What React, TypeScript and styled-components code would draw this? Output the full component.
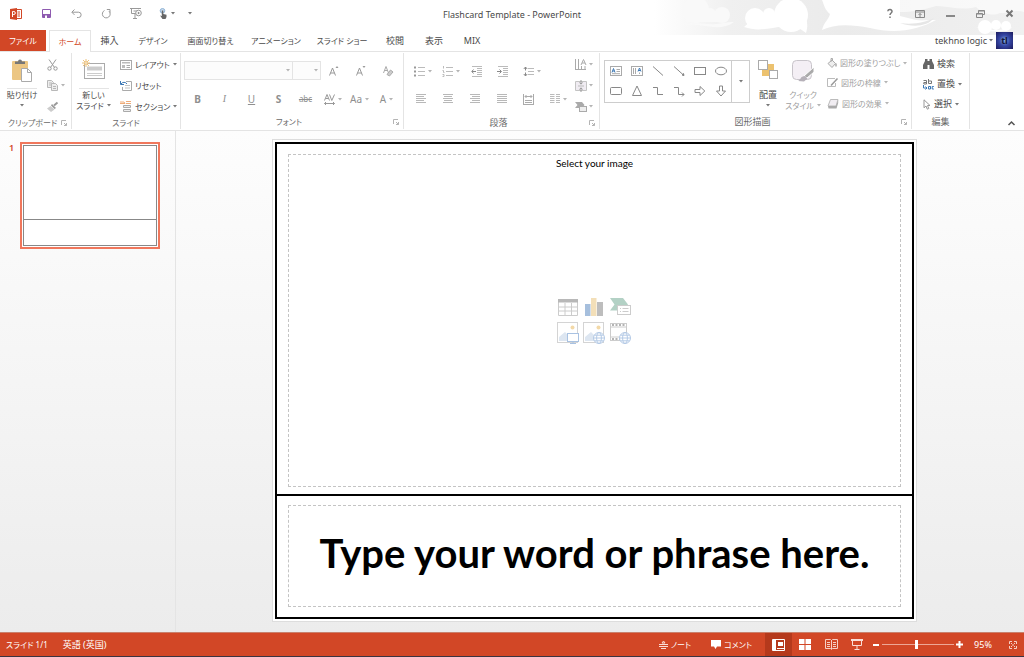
import React from "react";
import styled, { createGlobalStyle } from "styled-components";

const ACCENT = "#d24726";
const INK = "#4a4a4a";
const DIM = "#a0a0a0";
const LINE = "#e4e4e4";
const UI = `"Noto Sans", "Noto Sans CJK JP", sans-serif`;

const GlobalStyle = createGlobalStyle`
  *, *::before, *::after { box-sizing: border-box; }
  body { margin: 0; background: #fff; color: ${INK}; font-family: ${UI}; font-size: 9px; line-height: 12px; font-feature-settings: "palt"; }
  button, select, input { font: inherit; font-feature-settings: inherit; color: inherit; margin: 0; padding: 0; border: 0; background: none; }
  button { cursor: pointer; }
  h1, h2, p, ol { margin: 0; padding: 0; font: inherit; list-style: none; }
  svg { display: block; flex: none; overflow: visible; }
`;

const Page = styled.div`
  display: flex;
  flex-direction: column;
  min-height: 100vh;
`;

/* ---------- title bar and tabs ---------- */

const Top = styled.header`
  position: relative;
  z-index: 0;
`;

const CloudArt = styled.svg`
  position: absolute;
  z-index: -1;
  top: 0;
  right: 0;
  overflow: hidden;
`;

const TitleBar = styled.div`
  display: grid;
  grid-template-columns: 1fr auto 1fr;
  height: 30px;
`;

const Tools = styled.div<{ $end?: boolean }>`
  display: flex;
  height: 27px;
  padding-left: 1px;
  justify-content: ${(p) => (p.$end ? "flex-end" : "flex-start")};
`;

const ToolButton = styled.button<{ $w?: number }>`
  display: flex;
  align-items: center;
  justify-content: center;
  gap: 3px;
  width: ${(p) => p.$w ?? 30}px;
`;

const DocTitle = styled.h1`
  font-size: 9px;
  line-height: 30px;
`;

const TabBar = styled.nav`
  display: flex;
  height: 22px;
  border-bottom: 1px solid ${LINE};
`;

const Tab = styled.button<{ $w: number; $small?: boolean; $kind?: "file" | "on" }>`
  display: flex;
  justify-content: center;
  align-items: center;
  width: ${(p) => p.$w}px;
  height: ${(p) => (p.$kind === "on" ? 22 : 21)}px;
  white-space: nowrap;
  font-size: ${(p) => (p.$small ? 8 : 9)}px;
  color: ${(p) => (p.$kind === "file" ? "#fff" : p.$kind === "on" ? ACCENT : INK)};
  background: ${(p) => (p.$kind === "file" ? ACCENT : p.$kind === "on" ? "#fff" : "none")};
  border: ${(p) => (p.$kind === "on" ? `1px solid ${LINE}` : "0")};
  border-bottom: 0;
  margin-right: ${(p) => (p.$kind === "file" ? 3 : 0)}px;
`;

const Account = styled.button`
  display: flex;
  align-items: center;
  gap: 2px;
  height: 21px;
  margin-left: auto;
  margin-right: 11px;
`;

const Avatar = styled.span`
  width: 17px;
  height: 17px;
  margin-left: 1px;
  background: radial-gradient(circle, #7fa6d8 0%, #3546a4 45%, #1c1a5c 100%);
  color: #10143c;
  font-weight: 700;
  line-height: 17px;
  text-align: center;
`;

/* ---------- ribbon ---------- */

const Ribbon = styled.div`
  display: flex;
  height: 79px;
  border-bottom: 1px solid ${LINE};
`;

const Group = styled.section<{ $w: number; $pad?: number }>`
  display: flex;
  flex-direction: column;
  flex: none;
  width: ${(p) => p.$w}px;
  margin: 1px 0;
  padding: 1px 0 0 ${(p) => p.$pad ?? 0}px;
  border-right: 1px solid ${LINE};
`;

const GroupBody = styled.div`
  display: flex;
  height: 63px;
`;

const GroupLabel = styled.div<{ $pad?: number }>`
  display: flex;
  align-items: center;
  height: 14px;
  margin-left: -${(p) => p.$pad ?? 0}px;
  padding: 0 4px;
  color: #6a6a6a;
`;

const LabelText = styled.h2<{ $small?: boolean }>`
  flex: 1;
  text-align: center;
  white-space: nowrap;
  font-size: ${(p) => (p.$small ? 8 : 9)}px;
`;

const BigButton = styled.button<{ $w: number; $dim?: boolean }>`
  display: flex;
  flex-direction: column;
  align-items: center;
  width: ${(p) => p.$w}px;
  padding-top: 5px;
  color: ${(p) => (p.$dim ? DIM : INK)};
  line-height: 11px;
  white-space: nowrap;
`;

const BigIcon = styled.span<{ $rule?: boolean }>`
  display: flex;
  justify-content: center;
  width: 30px;
  height: 30px;
  border-bottom: 1px solid ${(p) => (p.$rule ? LINE : "transparent")};
`;

const BigText = styled.span<{ $small?: boolean }>`
  display: flex;
  align-items: center;
  justify-content: center;
  gap: 3px;
  height: 11px;
  font-size: ${(p) => (p.$small ? 8 : 9)}px;
`;

const Stack = styled.div<{ $ml?: number }>`
  display: flex;
  flex-direction: column;
  margin-left: ${(p) => p.$ml ?? 0}px;
`;

const RowButton = styled.button<{ $dim?: boolean; $small?: boolean; $gap?: number; $h?: number }>`
  display: flex;
  align-items: center;
  gap: ${(p) => p.$gap ?? 3}px;
  height: ${(p) => p.$h ?? 21}px;
  white-space: nowrap;
  font-size: ${(p) => (p.$small ? 8 : 9)}px;
  color: ${(p) => (p.$dim ? DIM : INK)};
`;

const Rows = styled.div`
  display: flex;
  flex-direction: column;
  gap: 8px;
  padding-top: 7px;
`;

const Row = styled.div`
  display: flex;
  height: 20px;
`;

const Combo = styled.label<{ $w: number }>`
  display: flex;
  align-items: center;
  width: ${(p) => p.$w}px;
  height: 19px;
  margin-right: -1px;
  padding-right: 2px;
  border: 1px solid ${LINE};
  background: #fcfcfc;
  select { flex: 1; min-width: 0; appearance: none; }
`;

const FormatButton = styled.button<{ $w?: number; $bold?: boolean; $italic?: boolean; $line?: string }>`
  display: flex;
  align-items: center;
  justify-content: center;
  gap: 3px;
  width: ${(p) => p.$w ?? 27}px;
  color: #8f8f8f;
  font-size: 10px;
  font-family: ${(p) => (p.$italic ? `"Liberation Serif", serif` : "inherit")};
  font-weight: ${(p) => (p.$bold ? 700 : 400)};
  font-style: ${(p) => (p.$italic ? "italic" : "normal")};
  text-decoration: ${(p) => p.$line ?? "none"};
`;

const SmallLetters = styled.span`
  font-size: 8px;
`;

const Gallery = styled.div`
  display: flex;
  width: 146px;
  height: 43px;
  margin-top: 6px;
  border: 1px solid #cdcdcd;
`;

const ShapeGrid = styled.div`
  display: grid;
  flex: none;
  grid-template-columns: repeat(6, 21px);
  grid-template-rows: repeat(2, 20px);
  border-right: 1px solid #cdcdcd;
`;

const ShapeButton = styled.button`
  display: flex;
  align-items: center;
  justify-content: center;
`;

const GalleryMore = styled.button`
  display: flex;
  flex: 1;
  align-items: center;
  justify-content: center;
`;

const Collapse = styled.button`
  align-self: flex-end;
  margin-left: auto;
  padding: 4px 9px;
`;

/* ---------- work area ---------- */

const Work = styled.main`
  display: flex;
  flex: 1;
  background: linear-gradient(#fdfdfd, #f5f5f5 50%, #ececec);
`;

const Thumbs = styled.ol`
  flex: none;
  width: 176px;
  border-right: 1px solid ${LINE};
  padding: 11px 0 0 9px;
`;

const Thumb = styled.li`
  display: flex;
  gap: 5px;
  color: ${ACCENT};
`;

const ThumbNumber = styled.span`
  width: 6px;
  font-weight: 600;
`;

const ThumbFrame = styled.button`
  display: flex;
  width: 140px;
  height: 107px;
  padding: 1px;
  border: 2px solid #f0775c;
  background: #fff;
`;

const ThumbPage = styled.span`
  display: grid;
  grid-template-rows: 76fr 26fr;
  flex: 1;
  align-self: stretch;
  border: 1px solid #888;
`;

const ThumbTop = styled.span`
  border-bottom: 1px solid #888;
`;

const Canvas = styled.div`
  display: flex;
  flex: 1;
  align-items: flex-start;
  justify-content: center;
  padding: 8px 11px 10px 0;
`;

const Paper = styled.article`
  width: 77%;
  aspect-ratio: 4 / 3;
  padding: 2px;
  border: 1px solid #ddd;
  background: #fff;
`;

const Slide = styled.div`
  display: grid;
  grid-template-rows: 352fr 122fr;
  height: 100%;
  border: 2px solid #000;
`;

const SlideCell = styled.div<{ $top?: boolean }>`
  display: flex;
  padding: ${(p) => (p.$top ? "10px 11px 7px" : "9px 11px 10px")};
  border-bottom: ${(p) => (p.$top ? "2px solid #000" : "0")};
`;

const Placeholder = styled.div<{ $center?: boolean }>`
  display: grid;
  grid-template-rows: ${(p) => (p.$center ? "1fr" : "16px 1fr 16px")};
  flex: 1;
  align-items: center;
  justify-items: center;
  padding-bottom: ${(p) => (p.$center ? 6 : 0)}px;
  border: 1px dashed #c4c4c4;
  color: #000;
  font-family: Lato, sans-serif;
`;

const Hint = styled.p`
  font-size: 10px;
`;

const Phrase = styled.p`
  font-size: 40px;
  line-height: 48px;
  font-weight: 700;
  white-space: nowrap;
`;

const InsertGrid = styled.div`
  display: grid;
  grid-template-columns: repeat(3, 26px);
  grid-template-rows: repeat(2, 26px);
  justify-items: center;
  align-items: center;
`;

const InsertButton = styled.button`
  display: flex;
`;

/* ---------- status bar ---------- */

const Status = styled.footer`
  display: flex;
  align-items: stretch;
  height: 25px;
  padding-left: 6px;
  border-top: 1px solid #c9806c;
  border-bottom: 1px solid #3b3340;
  background: ${ACCENT};
  color: #fff;
`;

const StatusText = styled.button<{ $mr: number; $small?: boolean }>`
  display: flex;
  align-items: center;
  gap: 3px;
  margin-right: ${(p) => p.$mr}px;
  font-size: ${(p) => (p.$small ? 8 : 9)}px;
  white-space: nowrap;
`;

const Spacer = styled.span`
  flex: 1;
`;

const ViewButton = styled.button<{ $on?: boolean; $w?: number }>`
  display: flex;
  align-items: center;
  justify-content: center;
  width: ${(p) => p.$w ?? 26}px;
  background: ${(p) => (p.$on ? "#b5391c" : "none")};
`;

const Zoom = styled.input`
  appearance: none;
  align-self: center;
  width: 72px;
  height: 12px;
  background: linear-gradient(#eda796, #eda796) center / 100% 1px no-repeat;
  &::-webkit-slider-thumb {
    appearance: none;
    width: 3px;
    height: 9px;
    background: #fff;
  }
`;

/* ---------- drawings ---------- */

type IconProps = { w: number; h: number; c?: string; sw?: number; children: React.ReactNode };

const Icon = ({ w, h, c = "#888", sw = 1, children }: IconProps) => (
  <svg width={w} height={h} viewBox={`0 0 ${w} ${h}`} fill="none" stroke={c} strokeWidth={sw} aria-hidden="true">
    {children}
  </svg>
);

const Caret = ({ dim }: { dim?: boolean }) => (
  <Icon w={4} h={3}>
    <path d="M0 0h4l-2 2.6z" fill={dim ? "#b4b4b4" : "#777"} stroke="none" />
  </Icon>
);

const Launcher = () => (
  <Icon w={6} h={6} c="#b4b4b4">
    <path d="M.5 5V.5H5M3 3l2.500 2.500M5.500 3v2.500H3" />
  </Icon>
);

const Clipboard = () => (
  <Icon w={20} h={23}>
    <rect x="0" y="2" width="16" height="19" rx="1" fill="#ecc683" stroke="none" />
    <path d="M3 5V2.500h3a2 2 0 0 1 4 0h3V5z" fill="#777" stroke="none" />
    <path d="M9.500 9.500h6l4 4v9h-10z" fill="#fff" stroke="#aaa" />
    <path d="M15.500 9.500v4h4" stroke="#aaa" />
  </Icon>
);

const NewSlide = () => (
  <Icon w={23} h={21}>
    <rect x="2.500" y="4.500" width="20" height="15" fill="#fff" stroke="#aaa" />
    <path d="M5 7.500h15v4H5z" fill="#ccc" stroke="none" />
    <path d="M5 14.500h15M5 16.500h15" stroke="#ccc" />
    <path d="M4 0v8M0 4h8M1 1l6 6M7 1L1 7" stroke="#edc27c" />
    <circle cx="4" cy="4" r="1.300" fill="#fff" stroke="#edc27c" />
  </Icon>
);

const Scissors = () => (
  <Icon w={11} h={12} c="#999">
    <path d="M2 .5l5.500 8M9 .5l-5.500 8" />
    <circle cx="2.500" cy="9.500" r="1.700" />
    <circle cx="8.500" cy="9.500" r="1.700" />
  </Icon>
);

const Copy = () => (
  <Icon w={11} h={11} c="#b8b8b8">
    <path d="M.5.5h4l2 2v5h-6zM2 3h3M2 5h3" fill="#eee" />
    <path d="M4.500 3.500h4l2 2v5h-6zM6 6.500h3M6 8.500h3" fill="#eee" />
  </Icon>
);

const Brush = () => (
  <Icon w={11} h={10} c="#999">
    <path d="M10.500.5L7 3.500" strokeWidth="2" />
    <path d="M5 2l4 4-1.500 1L4 3.500z" fill="#999" stroke="none" />
    <path d="M3.500 4L0 6.500 4 10l3.500-2.500z" fill="#ccc" stroke="none" />
  </Icon>
);

const Layout = () => (
  <Icon w={12} h={10} c="#aaa">
    <rect x=".5" y=".5" width="11" height="9" />
    <path d="M2 2h8v1.500H2zM2 5h3v3H2z" fill="#bbb" stroke="none" />
    <path d="M6.500 5.500H10M6.500 7.500H10" />
  </Icon>
);

const Reset = () => (
  <Icon w={12} h={11} c="#aaa">
    <path d="M6 1.500h5.500v9h-9V7" />
    <path d="M5 5.500h5M5 8h5" stroke="#c4c4c4" />
    <path d="M.5 1v3.500H4M1 4a3.500 3.500 0 0 1 6 0" stroke="#3c78b5" />
  </Icon>
);

const Section = () => (
  <Icon w={12} h={11} c="#aaa">
    <path d="M0 1h4l1 1.500H0M6 .5h5M6 2.500h5" stroke="#eeab78" />
    <path d="M3.500 4.500h7v2h-7zM3.500 8.500h7v2h-7z" fill="#eee" />
  </Icon>
);

const SaveIcon = () => (
  <Icon w={9} h={9} c="#8e5bb0">
    <path d="M.5.5h8v8h-8z" fill="#fff" />
    <path d="M1 5h7v3H1z" fill="#8e5bb0" stroke="none" />
    <path d="M3 6.500h2V9H3z" fill="#fff" stroke="none" />
  </Icon>
);

const PowerPointLogo = () => (
  <Icon w={12} h={12}>
    <path d="M6 1.500h5.500v9H6" fill="#fff" stroke={ACCENT} />
    <path d="M7.500 4H10M7.500 6H10M7.500 8H10" stroke={ACCENT} />
    <path d="M0 1l7-1v12l-7-1z" fill={ACCENT} stroke="none" />
    <path d="M2.500 9V3.500h1.300a1.500 1.500 0 0 1 0 3H2.500" stroke="#fff" />
  </Icon>
);

const Undo = () => (
  <Icon w={11} h={9} c="#999">
    <path d="M3.500.5L.8 3.200l2.700 2.700M1 3.200h6.500a2.600 2.600 0 0 1 0 5.300H6" />
  </Icon>
);

const Redo = () => (
  <Icon w={9} h={10} c="#999">
    <path d="M2.500 1.500A3.900 3.900 0 1 0 7 2.200M4.800.5h3.200v3.200" />
  </Icon>
);

const Present = () => (
  <Icon w={12} h={11} c="#999">
    <path d="M0 .5h11M1.500.5v5H6M5 6v4M3 10.500h4M3.500 3h4" />
    <circle cx="8.500" cy="5" r="2.800" fill="#fff" />
    <path d="M7.800 3.600v2.800L10 5z" fill="#888" stroke="none" />
  </Icon>
);

const Touch = () => (
  <Icon w={9} h={11}>
    <circle cx="3.500" cy="2.800" r="2.300" fill="#c8daec" stroke="#8fb3d6" />
    <path d="M2.800 2.500h1.500V6l3.200.8V9L6.500 11h-3L1 7.500l1.800.5z" fill="#666" stroke="none" />
  </Icon>
);

const lines = (xs: [number, number][], gap = 2) =>
  xs.map(([a, b], i) => `M${a} ${i * gap + 0.5}H${b}`).join("");

const Align = ({ kind }: { kind: "left" | "center" | "right" | "full" }) => {
  const sets: Record<string, [number, number][]> = {
    left: [[0, 10], [0, 8], [0, 10], [0, 8], [0, 10]],
    center: [[0, 10], [1, 9], [0, 10], [1, 9], [0, 10]],
    right: [[0, 10], [2, 10], [0, 10], [2, 10], [0, 10]],
    full: [[0, 10], [0, 10], [0, 10], [0, 10], [0, 10]],
  };
  return (
    <Icon w={10} h={10} c="#b8b8b8">
      <path d={lines(sets[kind])} />
    </Icon>
  );
};

const Bullets = ({ numbered }: { numbered?: boolean }) => (
  <Icon w={11} h={10} c="#bbb">
    <path d="M4 1.500h7M4 5.500h7M4 9.500h7" />
    {numbered ? (
      <path d="M1.500 0v2.500M.5 4.500h1v2h1M.5 8.500h1.500v2H.5" />
    ) : (
      <path d="M0 .5h2v2H0zM0 4.500h2v2H0zM0 8.500h2v2H0z" fill="#999" stroke="none" />
    )}
  </Icon>
);

const Indent = ({ more }: { more?: boolean }) => (
  <Icon w={11} h={11} c="#bbb">
    <path d="M1 .5h10M6 2.500h5M6 4.500h5M6 6.500h5M6 8.500h5M1 10.500h10" />
    <path d={more ? "M0 5.500h4M2.500 3.500l2 2-2 2" : "M5 5.500H1M2.500 3.500L.8 5.500l1.700 2"} stroke="#888" />
  </Icon>
);

const LineSpacing = () => (
  <Icon w={11} h={11} c="#bbb">
    <path d="M5 2.500h6M5 5.500h6M5 8.500h6" />
    <path d="M2.500 1v3.500M2.500 6.500V10M.8 3L2.500 1l1.700 2M.8 8l1.700 2 1.700-2" stroke="#888" />
  </Icon>
);

const Distribute = () => (
  <Icon w={11} h={11} c="#aaa">
    <path d="M.5 0v11M10.500 0v11M2 2.500h7M3.500 1L2 2.500 3.500 4M7.500 1L9 2.500 7.500 4M2 6.500h7M2 8.500h7M0 10.500h11" />
  </Icon>
);

const Columns = () => (
  <Icon w={10} h={10} c="#bbb">
    <path d="M0 .5h4.500M0 2.500h4.500M0 4.500h4.500M0 6.500h4.500M0 8.500h4.500M6 .5h4M6 2.500h4M6 4.500h4M6 6.500h4M6 8.500h4" />
  </Icon>
);

const TextDirection = () => (
  <Icon w={12} h={12} c="#aaa">
    <path d="M.5 0v11M3.500 0v11M6.500 7v4M10 7v4M6 6l2.500-5.500L11 6M7 4h3M0 10.500h11" />
  </Icon>
);

const VerticalAlign = () => (
  <Icon w={12} h={12} c="#999">
    <path d="M.5 1.500h11v9H.5z" fill="#f0ecf2" stroke="#c4c4c4" />
    <path d="M6 0v4M4.500 2.500L6 4.200l1.500-1.700M6 12V8M4.500 9.500L6 7.800l1.500 1.700" />
    <path d="M3 6h6" stroke="#bbb" />
  </Icon>
);

const SmartArt = () => (
  <Icon w={12} h={10} c="#aaa">
    <path d="M0 0h7l2.500 3L7 6H0l2.500-3z" fill="#aaa" stroke="none" />
    <rect x="4.500" y="4.500" width="7" height="5" fill="#eee" />
  </Icon>
);

const ClearFormat = () => (
  <Icon w={10} h={11} c="#aaa">
    <path d="M.5 7L3 .5 5.500 7M1.500 4.500h3" />
    <path d="M4 8.500L7.500 4 10 6 6.500 10z" fill="#ccc" />
  </Icon>
);

const SizeLetter = ({ down }: { down?: boolean }) => (
  <Icon w={9} h={10} c="#999">
    <path d="M.5 9.500L3.500 2l3 7.500M1.500 7h4" />
    <path d={down ? "M6.500 0h3L8 2z" : "M6.500 2h3L8 0z"} fill="#999" stroke="none" />
  </Icon>
);

const Spacing = () => (
  <Icon w={11} h={11} c="#999">
    <path d="M.5 6.500L3 .5l2.500 6M1.500 4.500h3M5.500.5l2.300 6L10.500.5M.5 9.500h10M2 8L.5 9.500 2 11M9 8l1.500 1.500L9 11" />
  </Icon>
);

const shapes: { name: string; art: React.ReactNode }[] = [
  {
    name: "テキスト ボックス",
    art: (
      <>
        <rect x=".5" y="1.500" width="11" height="9" stroke="#aaa" />
        <path d="M2 7.500L3.500 3.500 5 7.500M2.500 6h2" stroke="#3c78b5" />
        <path d="M6.500 4.500H10M6.500 6.500H10M2 8.700h8" stroke="#aaa" />
      </>
    ),
  },
  {
    name: "縦書きテキスト",
    art: (
      <>
        <rect x=".5" y="1.500" width="11" height="9" stroke="#aaa" />
        <path d="M7 6.500L8.500 3 10 6.500M7.500 5.500h2" stroke="#3c78b5" />
        <path d="M2.500 3v6M4.500 3v6M8.500 7.500v1.500" stroke="#aaa" />
      </>
    ),
  },
  { name: "直線", art: <path d="M1 1.500l10 9" /> },
  {
    name: "矢印",
    art: (
      <>
        <path d="M1 1.500l10 9" />
        <path d="M11 10.500L9 10l1.500-1.500z" fill="#777" />
      </>
    ),
  },
  { name: "四角形", art: <rect x=".5" y="2.500" width="11" height="7" /> },
  { name: "楕円", art: <ellipse cx="6" cy="6" rx="5.500" ry="3.800" /> },
  { name: "角丸四角形", art: <rect x=".5" y="2.500" width="11" height="7" rx="1" /> },
  { name: "三角形", art: <path d="M6 1l4.500 9.500h-9z" /> },
  { name: "カギ線", art: <path d="M1 2.500h4.500v7H11" /> },
  { name: "カギ線矢印", art: <path d="M1 2.500h4.500v7H11M9 7.500l2 2-2 2" /> },
  { name: "右矢印", art: <path d="M1 4.500h5v-3L10.800 6 6 10.500v-3H1z" /> },
  { name: "下矢印", art: <path d="M4.500 1h3v5h3L6 11 1.500 6h3z" /> },
];

const Arrange = () => (
  <Icon w={20} h={21}>
    <rect x="9" y="5" width="7" height="8" fill="#ecc26f" stroke="none" />
    <rect x="4" y="10" width="7" height="7" fill="#ecc26f" stroke="none" />
    <rect x=".5" y="1.500" width="9" height="9" fill="#fff" stroke="#aaa" />
    <rect x="11.500" y="11.500" width="8" height="8" fill="#fff" stroke="#aaa" />
  </Icon>
);

const QuickStyle = () => (
  <Icon w={23} h={23}>
    <rect x=".5" y="1.500" width="19" height="19" rx="4" fill="#f4eff5" stroke="#c8c4ca" />
    <path d="M22 8v5l-7 6-3-2z" fill="#aaa" stroke="#fff" />
    <path d="M13 17l2.500 2.500L12 22.500 6 22c3-1 2-5 7-5z" fill="#b5b0b8" stroke="none" />
  </Icon>
);

const Bucket = () => (
  <Icon w={10} h={10} c="#aaa">
    <path d="M1 5.500L5 2l3.500 3.500L5 9.500zM4 4V.5h1.500V3" fill="#eee" />
    <path d="M9 5.500v3" strokeWidth="1.500" />
  </Icon>
);

const Outline = () => (
  <Icon w={11} h={9} c="#bbb">
    <path d="M8 .5H.5v8h8V5" />
    <path d="M10.500.5L4 7.500" stroke="#999" strokeWidth="1.500" />
  </Icon>
);

const Effects = () => (
  <Icon w={12} h={10} c="#bbb">
    <path d="M3.500.5H11l-2 6.500H1z" fill="#f1edf2" />
    <path d="M1 7h8l2.200-6v3L9.500 9.500h-8z" fill="#aaa" stroke="none" />
  </Icon>
);

const Binoculars = () => (
  <Icon w={11} h={10}>
    <path d="M2 0h2.500v2h2V0H9v2l2 4v4H6.500V6h-2v4H0V6l2-4z" fill="#666" stroke="none" />
  </Icon>
);

const Replace = () => (
  <Icon w={11} h={11}>
    <path d="M.5 1.500h3V5H.8V3.500h2.500M5.500 0v4.500h3V2h-3" stroke="#777" />
    <path d="M.5 6v3h3M2.500 7.500L4 9l-1.500 1.500M7.500 7.500h-2V10h2zV10M10.800 7.500H9.200V10h1.600" stroke="#3c78b5" />
  </Icon>
);

const Pointer = () => (
  <Icon w={8} h={11} c="#999">
    <path d="M1 .8v8l2-1.800 1.300 3.200 1.500-.7-1.300-3H7z" fill="#fff" />
  </Icon>
);

const TableArt = () => (
  <Icon w={20} h={18} c="#ccc">
    <path d="M.5 1.500h19v16H.5zM.5 9h19M.5 13h19M7 5v12M13.500 5v12" />
    <path d="M0 1h20v3.500H0z" fill="#b8b8b8" stroke="none" />
  </Icon>
);

const ChartArt = () => (
  <Icon w={18} h={20}>
    <path d="M0 7h5.500v12H0z" fill="#a6bfdd" stroke="none" />
    <path d="M6 1h5.500v18H6z" fill="#f3dfb8" stroke="none" />
    <path d="M12 5h6v14h-6z" fill="#bdbdbd" stroke="none" />
  </Icon>
);

const SmartArtArt = () => (
  <Icon w={21} h={18}>
    <path d="M0 0h13l5 6.500-5 6H0l4.500-6z" fill="#b3d1c5" stroke="none" />
    <rect x="7.500" y="7.500" width="13" height="9" fill="#fff" stroke="#ccc" />
    <path d="M10 10.500h1M10 13.500h1M12.500 10.500h6M12.500 13.500h6" stroke="#ccc" />
  </Icon>
);

const Picture = () => (
  <>
    <rect x=".5" y=".5" width="20" height="20" fill="#fff" stroke="#d4d4d4" />
    <circle cx="15.500" cy="5.500" r="2" fill="#f3d9a8" stroke="none" />
    <path d="M2 19v-4l6-5 5 5 2-1 4 4v1z" fill="#dde6f1" stroke="none" />
  </>
);

const Globe = ({ x, y }: { x: number; y: number }) => (
  <g transform={`translate(${x} ${y})`} stroke="#b4cae6">
    <circle r="5.500" fill="#fff" />
    <ellipse rx="2.400" ry="5.500" />
    <path d="M-5.500 0H5.500M-4.600-2.800h9.200M-4.600 2.800h9.200" />
  </g>
);

const PictureArt = ({ online }: { online?: boolean }) => (
  <Icon w={22} h={22}>
    <Picture />
    {online ? (
      <Globe x={16} y={16} />
    ) : (
      <g stroke="#a9c2e2">
        <rect x="10.500" y="11.500" width="11" height="8" fill="#fff" />
        <path d="M16 19.500v2M13 21.500h6" />
      </g>
    )}
  </Icon>
);

const VideoArt = () => (
  <Icon w={20} h={22} c="#ccc">
    <rect x=".5" y="1.500" width="16" height="17" fill="#fff" />
    <path d="M.5 5h16M.5 15h16" />
    <path d="M2 3h14M2 17h8" stroke="#b4b4b4" strokeWidth="2" strokeDasharray="2 1.500" />
    <Globe x={15} y={16} />
  </Icon>
);

const inserts = [
  { name: "表の挿入", art: <TableArt /> },
  { name: "グラフの挿入", art: <ChartArt /> },
  { name: "SmartArt グラフィックの挿入", art: <SmartArtArt /> },
  { name: "図", art: <PictureArt /> },
  { name: "オンライン画像", art: <PictureArt online /> },
  { name: "ビデオの挿入", art: <VideoArt /> },
];

const tabs: { name: string; w: number; small?: boolean }[] = [
  { name: "挿入", w: 37 },
  { name: "デザイン", w: 50, small: true },
  { name: "画面切り替え", w: 65, small: true },
  { name: "アニメーション", w: 66, small: true },
  { name: "スライド ショー", w: 66, small: true },
  { name: "校閲", w: 40 },
  { name: "表示", w: 38 },
  { name: "MIX", w: 38 },
];

const Label = ({ text, pad, small, launcher }: { text: string; pad?: number; small?: boolean; launcher?: boolean }) => (
  <GroupLabel $pad={pad}>
    <LabelText $small={small}>{text}</LabelText>
    {launcher && (
      <button aria-label={`${text}の詳細`}>
        <Launcher />
      </button>
    )}
  </GroupLabel>
);

const Header = () => (
  <Top>
    <CloudArt width="370" height="35" viewBox="0 0 370 35" aria-hidden="true">
      <defs>
        <linearGradient id="sky">
          <stop offset="0" stopColor="#fff" />
          <stop offset=".2" stopColor="#f0f0f0" />
          <stop offset=".5" stopColor="#ebebeb" />
          <stop offset="1" stopColor="#f0f0f0" />
        </linearGradient>
      </defs>
      <path d="M0 0h370v35H0z" fill="url(#sky)" />
      <g fill="#f9f9f9">
        <circle cx="42" cy="10" r="13" />
        <circle cx="56" cy="14" r="6" />
        <circle cx="68" cy="15" r="8" />
        <path d="M28 25c14-4 22 0 34-1 8-1 12-2 18-2-8 6-18 6-28 4-9-1-16-2-24-1zM32 16h40v6H32z" />
      </g>
      <g fill="#fff">
        <circle cx="101" cy="18" r="10" />
        <circle cx="115" cy="14" r="6" />
        <circle cx="137" cy="15" r="17" />
        <path d="M90 27c14 5 26 1 40-1 10-1 14 1 22 7 3-10 0-14-2-18l-45-1z" />
        <path d="M168 0c2 5 3 10 8 14-1 5-6 8-8 16 12-6 28-6 48-2 16 4 32 4 46 0 8-2 14-5 20-8-8 0-14 1-20 0l-16-4V0z" />
        <path d="M246 0h124v12c-8-3-16 2-24 1-8 4-18 0-24-6-14 4-28-1-40-1-14 4-24 6-36 6z" opacity=".6" />
        <path d="M246 23c14 2 26-1 34-5-6 8-20 10-34 5z" fill="#e6e6e6" />
        <circle cx="331" cy="27" r="7" />
        <circle cx="342" cy="25" r="5" />
        <circle cx="352" cy="26" r="5" />
        <path d="M322 27c12 4 28 4 36 0-4 6-26 6-36 0z" />
      </g>
    </CloudArt>
    <TitleBar>
      <Tools>
        <ToolButton aria-label="PowerPoint"><PowerPointLogo /></ToolButton>
        <ToolButton aria-label="上書き保存"><SaveIcon /></ToolButton>
        <ToolButton aria-label="元に戻す"><Undo /></ToolButton>
        <ToolButton aria-label="繰り返し"><Redo /></ToolButton>
        <ToolButton aria-label="先頭から開始"><Present /></ToolButton>
        <ToolButton aria-label="タッチ/マウス モード" $w={32}><Touch /><Caret /></ToolButton>
        <ToolButton aria-label="クイック アクセスのカスタマイズ" $w={14}><Caret /></ToolButton>
      </Tools>
      <DocTitle>Flashcard Template - PowerPoint</DocTitle>
      <Tools $end>
        <ToolButton aria-label="ヘルプ">
          <Icon w={6} h={9} c="#777" sw={1.5}>
            <path d="M.8 2.200C1 0 5.200 0 5 2.500 5 4 3 4 3 6M3 7.500V9" />
          </Icon>
        </ToolButton>
        <ToolButton aria-label="リボンの表示オプション">
          <Icon w={10} h={8}>
            <path d="M.5.5h9v7h-9zM.5 2h9M5 7V3.500M3.500 5L5 3.500 6.500 5" />
          </Icon>
        </ToolButton>
        <ToolButton aria-label="最小化">
          <Icon w={9} h={7} c="#888" sw={2}>
            <path d="M0 6h9" />
          </Icon>
        </ToolButton>
        <ToolButton aria-label="元に戻す (縮小)">
          <Icon w={9} h={8}>
            <path d="M.5 3.500h6v4h-6zM2.500 3V.5h6v4H7M2.500 1h6M.5 4h6" />
          </Icon>
        </ToolButton>
        <ToolButton aria-label="閉じる" $w={29}>
          <Icon w={7} h={7} c="#777" sw={2}>
            <path d="M.5.5l6 6M6.500.5l-6 6" />
          </Icon>
        </ToolButton>
      </Tools>
    </TitleBar>
    <TabBar>
      <Tab $w={46} $kind="file" $small>ファイル</Tab>
      <Tab $w={42} $kind="on" $small>ホーム</Tab>
      {tabs.map((t) => (
        <Tab key={t.name} $w={t.w} $small={t.small}>{t.name}</Tab>
      ))}
      <Account>
        tekhno logic
        <Caret />
        <Avatar>tl</Avatar>
      </Account>
    </TabBar>
  </Top>
);

const RibbonBar = () => (
  <Ribbon>
    <Group $w={72}>
      <GroupBody>
        <BigButton $w={44}>
          <BigIcon $rule><Clipboard /></BigIcon>
          <BigText $small>貼り付け</BigText>
          <BigText><Caret /></BigText>
        </BigButton>
        <Stack $ml={3}>
          <RowButton aria-label="切り取り"><Scissors /></RowButton>
          <RowButton aria-label="コピー"><Copy /><Caret dim /></RowButton>
          <RowButton aria-label="書式のコピー/貼り付け"><Brush /></RowButton>
        </Stack>
      </GroupBody>
      <Label text="クリップボード" small launcher />
    </Group>

    <Group $w={109} $pad={5}>
      <GroupBody>
        <BigButton $w={33}>
          <BigIcon $rule><NewSlide /></BigIcon>
          <BigText $small>新しい</BigText>
          <BigText $small>スライド<Caret /></BigText>
        </BigButton>
        <Stack $ml={10}>
          <RowButton $small><Layout />レイアウト<Caret /></RowButton>
          <RowButton $small><Reset />リセット</RowButton>
          <RowButton $small><Section />セクション<Caret /></RowButton>
        </Stack>
      </GroupBody>
      <Label text="スライド" pad={5} small />
    </Group>

    <Group $w={223} $pad={3}>
      <GroupBody>
        <Rows>
          <Row>
            <Combo $w={109}>
              <select aria-label="フォント名" />
              <Caret dim />
            </Combo>
            <Combo $w={29}>
              <select aria-label="フォント サイズ" />
              <Caret dim />
            </Combo>
            <FormatButton aria-label="フォント サイズの拡大"><SizeLetter /></FormatButton>
            <FormatButton aria-label="フォント サイズの縮小"><SizeLetter down /></FormatButton>
            <FormatButton aria-label="書式のクリア"><ClearFormat /></FormatButton>
          </Row>
          <Row>
            <FormatButton $bold>B</FormatButton>
            <FormatButton $italic>I</FormatButton>
            <FormatButton $line="underline">U</FormatButton>
            <FormatButton $bold>S</FormatButton>
            <FormatButton $line="line-through"><SmallLetters>abc</SmallLetters></FormatButton>
            <FormatButton aria-label="文字の間隔"><Spacing /><Caret dim /></FormatButton>
            <FormatButton>Aa<Caret dim /></FormatButton>
            <FormatButton>A<Caret dim /></FormatButton>
          </Row>
        </Rows>
      </GroupBody>
      <Label text="フォント" pad={3} small launcher />
    </Group>

    <Group $w={196} $pad={3}>
      <GroupBody>
        <Rows>
          <Row>
            <FormatButton aria-label="箇条書き" $w={32}><Bullets /><Caret dim /></FormatButton>
            <FormatButton aria-label="段落番号" $w={24}><Bullets numbered /><Caret dim /></FormatButton>
            <FormatButton aria-label="インデントを減らす" $w={26}><Indent /></FormatButton>
            <FormatButton aria-label="インデントを増やす"><Indent more /></FormatButton>
            <FormatButton aria-label="行間" $w={32}><LineSpacing /><Caret dim /></FormatButton>
          </Row>
          <Row>
            <FormatButton aria-label="左揃え"><Align kind="left" /></FormatButton>
            <FormatButton aria-label="中央揃え"><Align kind="center" /></FormatButton>
            <FormatButton aria-label="右揃え"><Align kind="right" /></FormatButton>
            <FormatButton aria-label="両端揃え"><Align kind="full" /></FormatButton>
            <FormatButton aria-label="均等割り付け"><Distribute /></FormatButton>
            <FormatButton aria-label="段組み" $w={32}><Columns /><Caret dim /></FormatButton>
          </Row>
        </Rows>
        <Stack $ml={1}>
          <RowButton aria-label="文字列の方向" $gap={2}><TextDirection /><Caret dim /></RowButton>
          <RowButton aria-label="文字の配置" $gap={2}><VerticalAlign /><Caret dim /></RowButton>
          <RowButton aria-label="SmartArt に変換" $gap={2}><SmartArt /><Caret dim /></RowButton>
        </Stack>
      </GroupBody>
      <Label text="段落" pad={3} launcher />
    </Group>

    <Group $w={312} $pad={4}>
      <GroupBody>
        <Gallery>
          <ShapeGrid>
            {shapes.map((s) => (
              <ShapeButton key={s.name} aria-label={s.name}>
                <Icon w={12} h={12}>{s.art}</Icon>
              </ShapeButton>
            ))}
          </ShapeGrid>
          <GalleryMore aria-label="その他の図形"><Caret /></GalleryMore>
        </Gallery>
        <BigButton $w={36}>
          <BigIcon><Arrange /></BigIcon>
          <BigText>配置</BigText>
          <BigText><Caret /></BigText>
        </BigButton>
        <BigButton $w={34} $dim>
          <BigIcon><QuickStyle /></BigIcon>
          <BigText $small>クイック</BigText>
          <BigText $small>スタイル<Caret dim /></BigText>
        </BigButton>
        <Stack $ml={7}>
          <RowButton $dim $small $h={18}><Bucket />図形の塗りつぶし<Caret dim /></RowButton>
          <RowButton $dim $small><Outline />図形の枠線<Caret dim /></RowButton>
          <RowButton $dim $small><Effects />図形の効果<Caret dim /></RowButton>
        </Stack>
      </GroupBody>
      <Label text="図形描画" pad={4} launcher />
    </Group>

    <Group $w={58} $pad={11}>
      <GroupBody>
        <Stack>
          <RowButton $h={20}><Binoculars />検索</RowButton>
          <RowButton $h={20}><Replace />置換<Caret /></RowButton>
          <RowButton $h={20}><Pointer />選択<Caret /></RowButton>
        </Stack>
      </GroupBody>
      <Label text="編集" pad={11} />
    </Group>

    <Collapse aria-label="リボンを折りたたむ">
      <Icon w={7} h={5} c="#555" sw={1.5}>
        <path d="M.5 4l3-3 3 3" />
      </Icon>
    </Collapse>
  </Ribbon>
);

const Workspace = () => (
  <Work>
    <Thumbs>
      <Thumb>
        <ThumbNumber>1</ThumbNumber>
        <ThumbFrame aria-label="スライド 1">
          <ThumbPage><ThumbTop /></ThumbPage>
        </ThumbFrame>
      </Thumb>
    </Thumbs>
    <Canvas>
      <Paper>
        <Slide>
          <SlideCell $top>
            <Placeholder>
              <Hint>Select your image</Hint>
              <InsertGrid>
                {inserts.map((i) => (
                  <InsertButton key={i.name} aria-label={i.name}>{i.art}</InsertButton>
                ))}
              </InsertGrid>
            </Placeholder>
          </SlideCell>
          <SlideCell>
            <Placeholder $center>
              <Phrase>Type your word or phrase here.</Phrase>
            </Placeholder>
          </SlideCell>
        </Slide>
      </Paper>
    </Canvas>
  </Work>
);

const StatusBar = () => (
  <Status>
    <StatusText $mr={15} $small>スライド 1/1</StatusText>
    <StatusText $mr={0}>英語 (英国)</StatusText>
    <Spacer />
    <StatusText $mr={20} $small>
      <Icon w={9} h={8} c="#f9ded7">
        <path d="M0 3.500h9M0 5.500h9M2 7.500h5M3 2l1.500-2L6 2z" />
      </Icon>
      ノート
    </StatusText>
    <StatusText $mr={13} $small>
      <Icon w={10} h={9}>
        <path d="M0 0h10v6.500H6L4.500 9 3 6.500H0z" fill="#fff" stroke="none" />
      </Icon>
      コメント
    </StatusText>
    <ViewButton $on $w={27} aria-label="標準">
      <Icon w={13} h={12} c="#fff">
        <path d="M.5.5h12v11H.5zM3.500.5v11M5 9.500h7" />
        <path d="M6 3h5v4H6zM1 1h2v10H1z" fill="#fff" stroke="none" />
      </Icon>
    </ViewButton>
    <ViewButton aria-label="スライド一覧">
      <Icon w={12} h={11}>
        <path d="M0 0h5.500v5H0zM6.500 0H12v5H6.500zM0 6h5.500v5H0zM6.500 6H12v5H6.500z" fill="#fff" stroke="none" />
      </Icon>
    </ViewButton>
    <ViewButton aria-label="閲覧表示">
      <Icon w={13} h={11} c="#f6cfc5">
        <path d="M.5.5h5l1 1 1-1h5v9h-5l-1 1-1-1h-5zM6.500 1v9M2 3.500h3M2 5.500h3M2 7.500h3M8 3.500h3M8 5.500h3M8 7.500h3" />
      </Icon>
    </ViewButton>
    <ViewButton aria-label="スライド ショー">
      <Icon w={12} h={11} c="#f9ded7">
        <path d="M0 1h12" strokeWidth="2" />
        <path d="M1.500 2v4.500h9V2M6 7v3M3.500 10.500h5" />
      </Icon>
    </ViewButton>
    <ViewButton $w={12} aria-label="縮小">
      <Icon w={6} h={6} c="#fff" sw={2}>
        <path d="M0 3h6" />
      </Icon>
    </ViewButton>
    <Zoom type="range" min={10} max={190} defaultValue={95} aria-label="ズーム" />
    <ViewButton $w={10} aria-label="拡大">
      <Icon w={7} h={7} c="#fff" sw={2}>
        <path d="M0 3.500h7M3.500 0v7" />
      </Icon>
    </ViewButton>
    <ViewButton $w={38}>95%</ViewButton>
    <ViewButton $w={22} aria-label="ウィンドウに合わせる">
      <Icon w={8} h={8} c="#f6cfc5">
        <path d="M.5 3V.5H3M5 .5h2.500V3M7.500 5v2.500H5M3 7.500H.5V5M2 2l1.500 1.500M6 2L4.500 3.500M2 6l1.500-1.500M6 6L4.500 4.500" />
      </Icon>
    </ViewButton>
  </Status>
);

export default function App() {
  return (
    <Page>
      <GlobalStyle />
      <Header />
      <RibbonBar />
      <Workspace />
      <StatusBar />
    </Page>
  );
}
